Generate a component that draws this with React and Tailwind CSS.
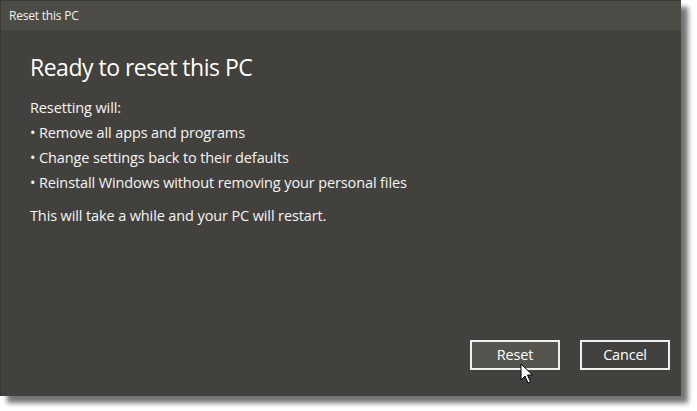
export default function App() {
  const font = { fontFamily: '"Open Sans", "Noto Sans", sans-serif' };
  return (
    <div className="w-[697px] h-[411px] bg-white relative overflow-hidden" style={font}>
      <div className="w-[681px] h-[396px] bg-[#43413d] flex flex-col border-t border-l border-[#3a3935] shadow-[7px_7px_5px_rgba(0,0,0,0.55)]">
        <div className="h-[29px] bg-[#4c4b46] flex items-center pl-[8px] text-[12px] text-[#f2f2f2] tracking-[-0.2px]">
          Reset this PC
        </div>
        <div className="flex-1 flex flex-col pl-[29px]">
          <div className="mt-[22px] text-[23px] leading-[30px] text-white tracking-[-0.5px]">
            Ready to reset this PC
          </div>
          <div className="mt-[13px] text-[14.5px] leading-[25px] text-[#f5f5f5] tracking-[-0.12px]">
            <div>Resetting will:</div>
            <div>• Remove all apps and programs</div>
            <div>• Change settings back to their defaults</div>
            <div>• Reinstall Windows without removing your personal files</div>
            <div className="mt-[8px]">This will take a while and your PC will restart.</div>
          </div>
          <div className="flex-1" />
          <div className="flex justify-end gap-[20px] pr-[11px] pb-[26px]">
            <div className="w-[90px] h-[30px] border-2 border-[#f0f0f0] bg-[#56544f] flex items-center justify-center text-[14.5px] text-white tracking-[-0.2px]">
              Reset
            </div>
            <div className="w-[90px] h-[30px] border-2 border-[#f0f0f0] bg-[#43413d] flex items-center justify-center text-[14.5px] text-white tracking-[-0.2px]">
              Cancel
            </div>
          </div>
        </div>
      </div>
      <svg className="absolute left-[520px] top-[363px]" width="14" height="22" viewBox="0 0 14 22">
        <path d="M1 1 L1 17 L5 13 L8 20 L10.5 19 L7.5 12 L12.5 12 Z" fill="white" stroke="black" strokeWidth="1" strokeLinejoin="miter" />
      </svg>
    </div>
  );
}
